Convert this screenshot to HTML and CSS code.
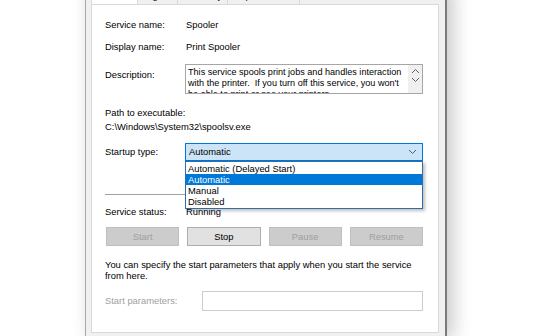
FILE: index.html
```html
<!DOCTYPE html>
<html lang="en">
<head>
    <meta charset="UTF-8">
    <title>Print Spooler Properties</title>
    <link rel="stylesheet" href="styles.css">
</head>
<body>
    <div class="dialog">
        <div class="tabs">
            <div class="tab active">General</div>
            <div class="tab">Log On</div>
            <div class="tab">Recovery</div>
            <div class="tab">Dependencies</div>
        </div>
        <div class="panel">
            <div class="row first"><span class="label">Service name:</span><span class="value">Spooler</span></div>
            <div class="row name"><span class="label">Display name:</span><span class="value">Print Spooler</span></div>
            <div class="row desc-row">
                <span class="label desc-label">Description:</span>
                <div class="desc-box">
                    <div class="desc-text">This service spools print jobs and handles interaction with the printer.&nbsp; If you turn off this service, you won't be able to print or see your printers.</div>
                    <div class="scroll">
                        <svg width="9" height="6" viewBox="0 0 9 6"><path d="M1 5 L4.5 1.5 L8 5" fill="none" stroke="#606060" stroke-width="1"/></svg>
                        <svg width="9" height="6" viewBox="0 0 9 6"><path d="M1 1 L4.5 4.5 L8 1" fill="none" stroke="#606060" stroke-width="1"/></svg>
                    </div>
                </div>
            </div>
            <div class="path-label">Path to executable:</div>
            <div class="path-value">C:\Windows\System32\spoolsv.exe</div>
            <div class="row startup">
                <span class="label">Startup type:</span>
                <div class="select">
                    <span>Automatic</span>
                    <svg width="9" height="6" viewBox="0 0 9 6"><path d="M1 1 L4.5 4.5 L8 1" fill="none" stroke="#606060" stroke-width="1"/></svg>
                    <ul class="options">
                        <li>Automatic (Delayed Start)</li>
                        <li class="selected">Automatic</li>
                        <li>Manual</li>
                        <li>Disabled</li>
                    </ul>
                </div>
            </div>
            <div class="separator"></div>
            <div class="row status"><span class="label">Service status:</span><span class="value">Running</span></div>
            <div class="buttons">
                <button class="btn" disabled>Start</button>
                <button class="btn">Stop</button>
                <button class="btn" disabled>Pause</button>
                <button class="btn" disabled>Resume</button>
            </div>
            <p class="hint">You can specify the start parameters that apply when you start the service from here.</p>
            <div class="row params">
                <span class="label muted">Start parameters:</span>
                <div class="param-box"></div>
            </div>
        </div>
    </div>
</body>
</html>
```

FILE: styles.css
```css
* { box-sizing: border-box; }
html, body { margin: 0; padding: 0; background: #fff; overflow: hidden; }
body { font-family: "Liberation Sans", Arial, sans-serif; font-size: 9.4px; color: #000; line-height: 12px; }

.dialog { width: 362px; margin: -17px 0 0 85px; background: #f0f0f0; border-left: 1px solid #a8a8a8; border-right: 2px solid #7a7a7a; padding: 0 6px 4px 5px; box-shadow: 6px 2px 18px rgba(0,0,0,0.22); }

.tabs { display: flex; height: 21px; }
.tab { height: 21px; padding-top: 6px; text-align: center; border: 1px solid #d9d9d9; border-bottom: none; border-left: none; background: #f0f0f0; }
.tab.active { width: 47px; background: #fff; border-left: 1px solid #d9d9d9; }
.tab:nth-child(2) { width: 40px; }
.tab:nth-child(3) { width: 50px; }
.tab:nth-child(4) { width: 72px; }

.panel { background: #fff; border: 1px solid #d9d9d9; padding: 14px 15px 21px 13px; }

.row { display: flex; align-items: center; }
.label { width: 80px; flex: none; }
.value { padding-left: 1px; }
.name { margin-top: 10px; }

.desc-row { margin-top: 11px; align-items: flex-start; }
.desc-label { margin-top: 5px; }
.desc-box { display: flex; width: 238px; height: 30px; border: 1px solid #a6a6a6; overflow: hidden; }
.desc-text { flex: 1; min-width: 0; padding: 2px 0 0 2px; line-height: 11px; font-size: 9.1px; }
.scroll { width: 14px; flex: none; background: #f0f0f0; display: flex; flex-direction: column; align-items: center; padding-top: 3px; gap: 3px; }

.path-label { margin-top: 13px; }
.path-value { margin-top: 2px; }

.startup { margin-top: 10px; }
.select { position: relative; width: 238px; height: 18px; background: #cce4f7; border: 1px solid #0078d7; display: flex; align-items: center; justify-content: space-between; padding: 0 5px 0 3px; }
.options { position: absolute; left: -1px; right: -1px; top: 17px; margin: 0; padding: 1px 0; list-style: none; background: #fff; border: 1px solid #2f6ea8; box-shadow: 2px 2px 3px rgba(0,0,0,0.25); z-index: 2; }
.options li { height: 11px; line-height: 11px; padding-left: 2px; }
.options li.selected { background: #0078d7; color: #fff; }

.separator { height: 1px; background: #a0a0a0; margin-top: 33px; }

.status { margin-top: 11px; }

.buttons { display: grid; grid-template-columns: repeat(4, 1fr); gap: 8px; margin-top: 9px; padding-left: 1px; }
.btn { height: 19px; font: inherit; color: #000; background: #e1e1e1; border: 1px solid #adadad; padding: 0; }
.btn:disabled { background: #cccccc; border-color: #bfbfbf; color: #a0a0a0; }

.hint { margin: 13px 0 0; line-height: 11px; }

.params { margin-top: 10px; }
.muted { color: #a0a0a0; width: 97px; }
.param-box { width: 221px; height: 20px; border: 1px solid #cccccc; background: #fff; }
```
